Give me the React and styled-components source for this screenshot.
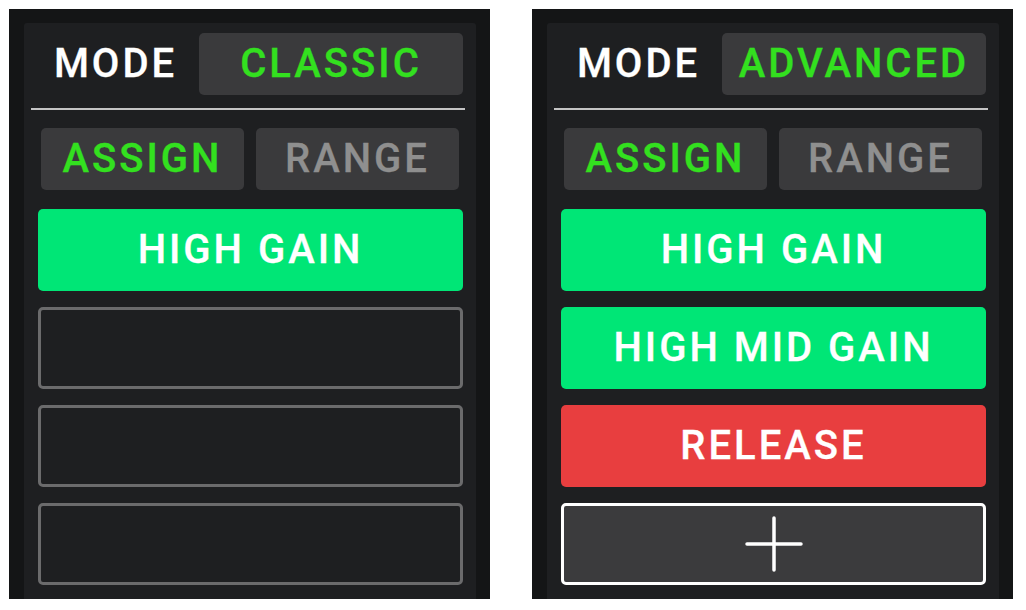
import React from "react";
import styled, { createGlobalStyle, css } from "styled-components";

const Global = createGlobalStyle`
  html, body { margin: 0; padding: 0; background: #ffffff; }
  body { font-family: Roboto, "Liberation Sans", sans-serif; }
`;

const labelText = css`
  font-size: 40px;
  font-weight: 500;
  letter-spacing: 3px;
  line-height: 1;
  -webkit-text-stroke: 0.3px currentColor;
`;

const Page = styled.div`
  display: flex;
  gap: 42px;
  padding: 9px 0 0 9px;
`;

const Frame = styled.div`
  width: 481px;
  height: 590px;
  box-sizing: border-box;
  background: #141516;
  padding: 14px 14px 0 15px;
  display: flex;
`;

const Inner = styled.div`
  flex: 1;
  background: #1e1f21;
  border-radius: 3px 3px 0 0;
  padding: 10px 13px 0 14px;
  display: flex;
  flex-direction: column;
  box-sizing: border-box;
`;

const Header = styled.div`
  display: flex;
  align-items: center;
  height: 62px;
`;

const Label = styled.div`
  flex: 0 0 161px;
  box-sizing: border-box;
  padding-right: 6px;
  text-align: center;
  color: #ffffff;
  ${labelText}
`;

const Pill = styled.div`
  flex: 1;
  height: 62px;
  display: flex;
  align-items: center;
  justify-content: center;
  background: #3a3a3c;
  border-radius: 5px;
  color: ${(p) => (p.$active ? "#33e01f" : "#8f8f8f")};
  ${labelText}
`;

const Divider = styled.div`
  height: 2px;
  background: #c4c4c4;
  margin: 13px -2px 0 -7px;
`;

const Tabs = styled.div`
  display: grid;
  grid-template-columns: 1fr 1fr;
  gap: 12px;
  margin: 18px 4px 0 3px;
`;

const Slots = styled.div`
  display: flex;
  flex-direction: column;
  gap: 16px;
  margin-top: 19px;
`;

const Slot = styled.div`
  height: 82px;
  box-sizing: border-box;
  border-radius: 5px;
  display: flex;
  align-items: center;
  justify-content: center;
  color: #ffffff;
  ${labelText}
  background: ${(p) =>
    p.$kind === "green"
      ? "#00e676"
      : p.$kind === "red"
      ? "#e83e3f"
      : p.$kind === "add"
      ? "#3b3b3d"
      : "#1e1f21"};
  border: ${(p) =>
    p.$kind === "add"
      ? "3px solid #ffffff"
      : p.$kind === "empty"
      ? "3px solid #6b6b6c"
      : "none"};
`;

const Plus = () => (
  <svg width="58" height="56" viewBox="0 0 58 56">
    <line x1="2" y1="28" x2="56" y2="28" stroke="#ffffff" strokeWidth="3.5" strokeLinecap="round" />
    <line x1="29" y1="2" x2="29" y2="54" stroke="#ffffff" strokeWidth="3.5" strokeLinecap="round" />
  </svg>
);

const Panel = ({ mode, slots }) => (
  <Frame>
    <Inner>
      <Header>
        <Label>MODE</Label>
        <Pill $active>{mode}</Pill>
      </Header>
      <Divider />
      <Tabs>
        <Pill $active>ASSIGN</Pill>
        <Pill>RANGE</Pill>
      </Tabs>
      <Slots>
        {slots.map((s, i) => (
          <Slot key={i} $kind={s.kind}>
            {s.kind === "add" ? <Plus /> : s.text}
          </Slot>
        ))}
      </Slots>
    </Inner>
  </Frame>
);

export default function App() {
  return (
    <>
      <Global />
      <Page>
        <Panel
          mode="CLASSIC"
          slots={[
            { kind: "green", text: "HIGH GAIN" },
            { kind: "empty" },
            { kind: "empty" },
            { kind: "empty" },
          ]}
        />
        <Panel
          mode="ADVANCED"
          slots={[
            { kind: "green", text: "HIGH GAIN" },
            { kind: "green", text: "HIGH MID GAIN" },
            { kind: "red", text: "RELEASE" },
            { kind: "add" },
          ]}
        />
      </Page>
    </>
  );
}
